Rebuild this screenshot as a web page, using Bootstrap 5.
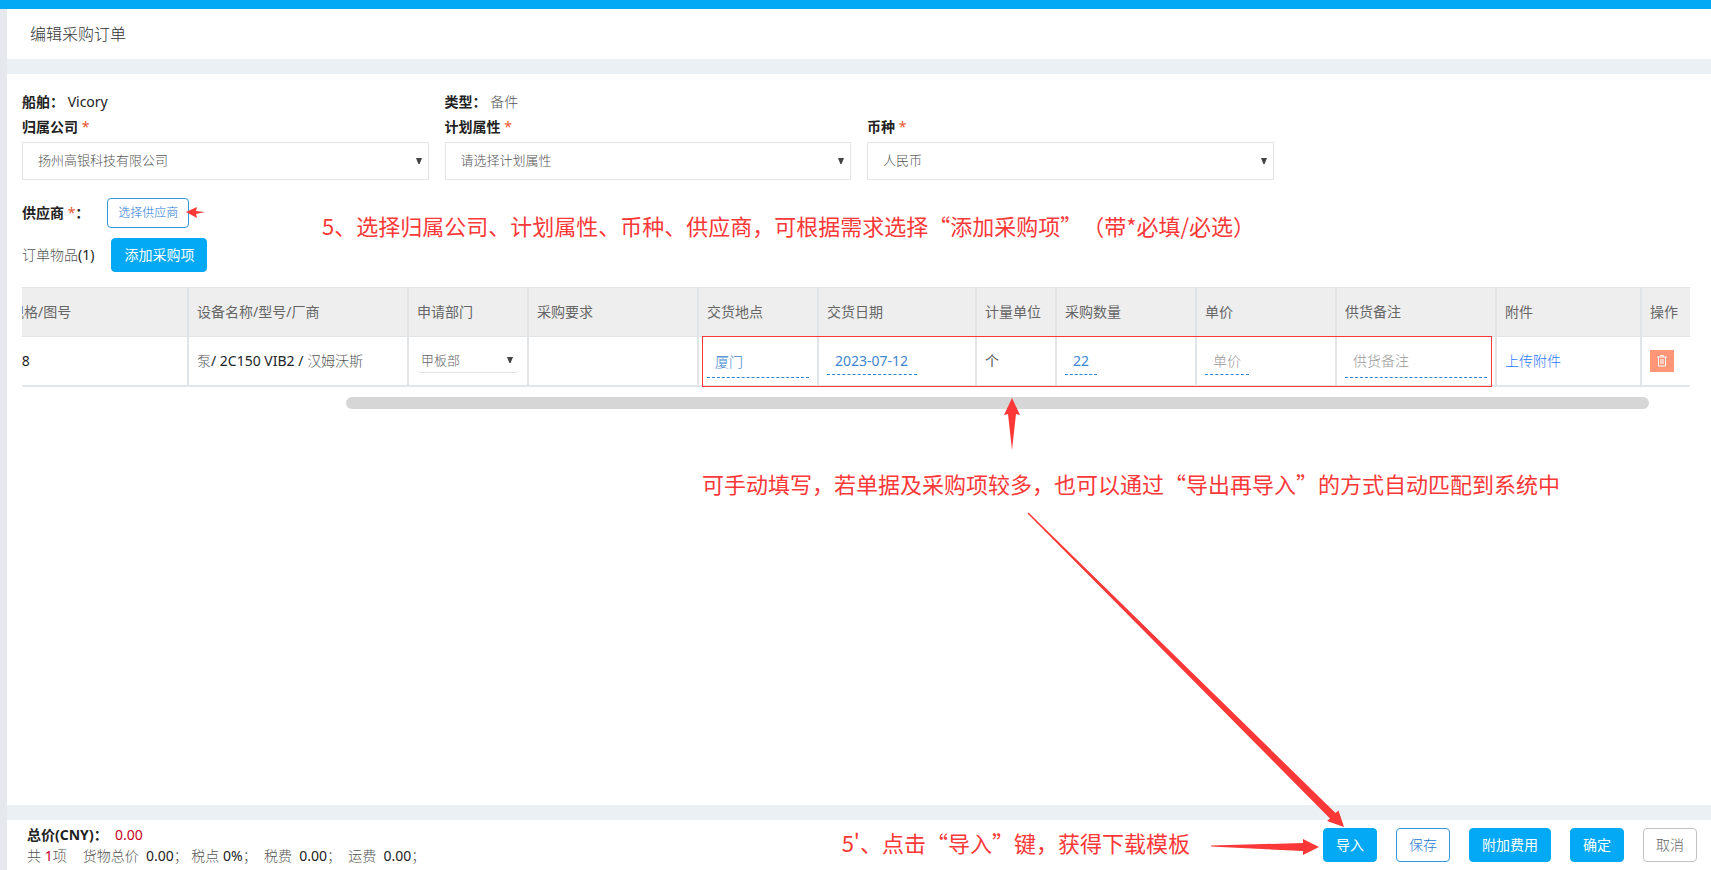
<!DOCTYPE html>
<html lang="zh-CN">
<head>
<meta charset="utf-8">
<meta name="viewport" content="width=device-width, initial-scale=1">
<title>编辑采购订单</title>
<link href="https://cdn.jsdelivr.net/npm/bootstrap@5.3.0/dist/css/bootstrap.min.css" rel="stylesheet">
<style>
  body {
    font-family: "Noto Sans", "Noto Sans CJK SC", sans-serif;
    font-size: 14px;
    line-height: 20px;
    color: #222;
    background: #ebf0f4;
    min-height: 100vh;
    padding-left: 7px;
    border-top: 9px solid #03a9f4;
    box-shadow: inset 7px 0 #e5e9ee;
    overflow-x: hidden;
  }
  .zh { color: #555; font-weight: 300; }
  .page-title { height: 50px; padding: 0 23px; font-size: 16px; color: #333; font-weight: 300; }
  .order-form { margin: 15px 0; padding: 18px 15px 0 15px; }
  .field-row { --bs-gutter-x: 16px; margin-bottom: 5px; }
  .lbl { font-weight: 700; color: #222; }
  label.lbl { margin-bottom: 5px; }
  .star { color: #e8562d; font-weight: 400; }
  .form-select {
    height: 38px; padding: 0 24px 0 15px;
    font-size: 13px; font-weight: 300; color: #555;
    border: 1px solid #e3e5e6; border-radius: 0;
    background-image: url("data:image/svg+xml,%3Csvg xmlns='http://www.w3.org/2000/svg' viewBox='0 0 6 6'%3E%3Cpath d='M0 0h6L3.600 6H2.400z' fill='%23444'/%3E%3C/svg%3E");
    background-size: 6px 6px; background-position: right 6px center;
  }
  .dept-select { width: 102px; height: 25px; padding: 0 16px 0 4px; border-width: 0 0 1px; border-radius: 4px; color: #666; }
  .btn { font-size: 14px; line-height: 20px; padding: 6px 12px; border-radius: 4px; }
  .btn-blue { --bs-btn-bg: #03a9f4; --bs-btn-border-color: #03a9f4; --bs-btn-color: #fff; --bs-btn-hover-bg: #0295d8; --bs-btn-hover-color: #fff; }
  .btn-line { --bs-btn-bg: #fff; --bs-btn-border-color: #3598dc; --bs-btn-color: #1f78d6; font-weight: 300; }
  .btn-plain { --bs-btn-bg: #fff; --bs-btn-border-color: #c2c2c2; --bs-btn-color: #666; font-weight: 300; }
  .btn-pick { font-size: 12px; padding: 4px 10px; }
  .supplier { margin-top: 18px; gap: 18px; }
  .items-head { margin-top: 10px; gap: 17px; }
  .table-clip { margin: 15px 6px 0 0; }
  .order-table { table-layout: fixed; flex: none; width: calc(100% + 20px); min-width: 1688px; margin: 0; border-top: 1px solid #e1e5e8; border-bottom: 2px solid #e1e5e8; }
  .order-table > :not(caption) > * > * { height: 49px; padding: 0 8px; vertical-align: middle; font-weight: 400; border: 0 solid #e1e5e8; border-right-width: 2px; box-shadow: none; white-space: nowrap; }
  .order-table > :not(caption) > * > :last-child { border-right: 0; }
  .order-table > thead > tr > th { background: #eee; color: #666; border-bottom-width: 1px; }
  .edit-box { display: block; border: 0; border-bottom: 1px dashed #2f83cf; background: none; padding: 0 8px; height: 29px; color: #3f86cf; border-radius: 0; }
  .edit-tall { width: 100%; height: 31px; padding-bottom: 2px; margin-top: 3px; }
  .edit-box::placeholder { color: #999; opacity: 1; font-weight: 300; }
  .zh-in { font-weight: 300; }
  .link-up { color: #2b78ff; text-decoration: none; font-weight: 300; }
  .btn-del { width: 24px; height: 22px; padding: 0; border: 0; border-radius: 0; background: #ff9678; }
  .scroll-thumb { height: 12px; border-radius: 6px; background: #d6d6d6; margin: 10px 47px 0 324px; }
  .foot { height: 50px; padding: 0 14px 0 20px; }
  .totals { line-height: 21px; }
  .sum { color: #c8001e; }
  .gap-btn { gap: 19px; }
  .note { position: absolute; font-family: "Noto Sans CJK SC", sans-serif; font-size: 22px; line-height: 32px; color: #fb3838; white-space: nowrap; pointer-events: none; font-kerning: none; text-spacing-trim: space-all; font-feature-settings: "chws" 0; }
  .note-a { left: 322px; top: 209px; }
  .note-b { left: 702px; top: 467px; }
  .note-c { right: 521px; bottom: 12px; }
  .arrows { position: absolute; left: 0; top: 0; pointer-events: none; }
</style>
</head>
<body class="d-flex flex-column">

<header class="page-title bg-white d-flex align-items-center">编辑采购订单</header>

<main class="order-form bg-white flex-grow-1">
  <div class="row field-row">
    <div class="col-3"><span class="lbl">船舶&#xFF1A;</span> Vicory</div>
    <div class="col-3"><span class="lbl">类型&#xFF1A;</span> <span class="zh">备件</span></div>
  </div>
  <div class="row field-row">
    <div class="col-3">
      <label class="lbl" for="company">归属公司 <span class="star">*</span></label>
      <select class="form-select" id="company"><option>扬州高银科技有限公司</option></select>
    </div>
    <div class="col-3">
      <label class="lbl" for="plan">计划属性 <span class="star">*</span></label>
      <select class="form-select" id="plan"><option>请选择计划属性</option></select>
    </div>
    <div class="col-3">
      <label class="lbl" for="currency">币种 <span class="star">*</span></label>
      <select class="form-select" id="currency"><option>人民币</option></select>
    </div>
  </div>

  <div class="supplier d-flex align-items-center">
    <span class="lbl">供应商 <span class="star">*</span>&#xFF1A;</span>
    <button type="button" class="btn btn-line btn-pick">选择供应商</button>
  </div>

  <div class="items-head d-flex align-items-center">
    <span><span class="zh">订单物品</span>(1)</span>
    <button type="button" class="btn btn-blue">添加采购项</button>
  </div>

  <div class="table-clip d-flex justify-content-end overflow-hidden">
    <table class="table order-table">
      <colgroup>
        <col style="width:186px"><col style="width:220px"><col style="width:120px"><col style="width:170px"><col style="width:120px"><col style="width:158px"><col style="width:80px"><col style="width:140px"><col style="width:140px"><col style="width:160px"><col style="width:145px"><col style="width:49px">
      </colgroup>
      <thead>
        <tr><th>规格/图号</th><th>设备名称/型号/厂商</th><th>申请部门</th><th>采购要求</th><th>交货地点</th><th>交货日期</th><th>计量单位</th><th>采购数量</th><th>单价</th><th>供货备注</th><th>附件</th><th>操作</th></tr>
      </thead>
      <tbody>
        <tr>
          <td>1.8</td>
          <td><span class="zh">泵</span>/ 2C150 VIB2 / <span class="zh">汉姆沃斯</span></td>
          <td><select class="form-select dept-select" aria-label="申请部门"><option>甲板部</option></select></td>
          <td></td>
          <td><input class="edit-box edit-tall zh-in" aria-label="交货地点" value="厦门"></td>
          <td><input class="edit-box" style="width:90px" aria-label="交货日期" value="2023-07-12"></td>
          <td class="zh">个</td>
          <td><input class="edit-box" style="width:32px" aria-label="采购数量" value="22"></td>
          <td><input class="edit-box" style="width:44px" aria-label="单价" placeholder="单价"></td>
          <td><input class="edit-box edit-tall" aria-label="供货备注" placeholder="供货备注"></td>
          <td><a class="link-up" href="#">上传附件</a></td>
          <td>
            <button type="button" class="btn btn-del d-flex align-items-center justify-content-center" aria-label="删除">
              <svg width="10" height="12" viewBox="0 0 10 12" fill="none" stroke="#fff"><path d="M0 2h10M3.500 1.500v-1h3v1M1.500 2v9h7V2M4 4v5M6 4v5"/></svg>
            </button>
          </td>
        </tr>
      </tbody>
    </table>
  </div>
  <div class="scroll-thumb"></div>
</main>

<footer class="foot bg-white d-flex align-items-center justify-content-between">
  <div class="totals">
    <div><span class="lbl">总价(CNY)&#xFF1A;</span>&nbsp; <span class="sum">0.00</span></div>
    <div><span class="zh">共</span> <span class="sum">1</span><span class="zh me-3">项</span><span class="zh">货物总价</span>&nbsp; 0.00<span class="zh">&#xFF1B; 税点</span> 0%<span class="zh">&#xFF1B;&nbsp; 税费</span>&nbsp; 0.00<span class="zh">&#xFF1B;&nbsp; 运费</span>&nbsp; 0.00<span class="zh">&#xFF1B;</span></div>
  </div>
  <div class="d-flex gap-btn">
    <button type="button" class="btn btn-blue">导入</button>
    <button type="button" class="btn btn-line">保存</button>
    <button type="button" class="btn btn-blue">附加费用</button>
    <button type="button" class="btn btn-blue">确定</button>
    <button type="button" class="btn btn-plain">取消</button>
  </div>
</footer>

<!-- guide notes laid over the form -->
<div class="note note-a">5、选择归属公司、计划属性、币种、供应商&#xFF0C;可根据需求选择“添加采购项”&#xFF08;带*必填/必选&#xFF09;</div>
<div class="note note-b">可手动填写&#xFF0C;若单据及采购项较多&#xFF0C;也可以通过“导出再导入”的方式自动匹配到系统中</div>
<div class="note note-c">5'、点击“导入”键&#xFF0C;获得下载模板</div>
<svg class="arrows" width="1711" height="860" viewBox="0 0 1711 860" fill="#fb3838" aria-hidden="true">
  <rect x="702.500" y="336.500" width="789" height="50" fill="none" stroke="#fb3838"/>
  <path d="M186 212l11-5-1 4 9 1-9 2 1 4z"/>
  <path d="M1012 398l8 17-4-1-4 36-4-36-4 1z"/>
  <path d="M1028.500 512.500L1335.500 813l3-2.500 5.500 16.500-17-6 3-2.500L1027.500 513.500z"/>
  <path d="M1211 845.500l92-2.500v-4l16 8-16 8v-4l-92-4.500z"/>
</svg>

<script src="https://cdn.jsdelivr.net/npm/bootstrap@5.3.0/dist/js/bootstrap.bundle.min.js"></script>
</body>
</html>
